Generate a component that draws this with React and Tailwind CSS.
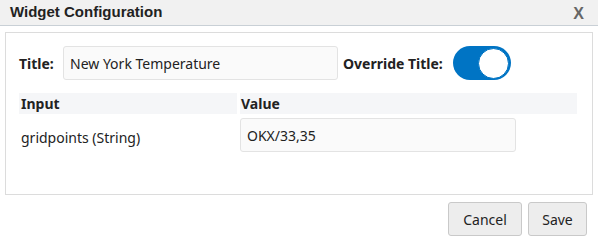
import React, { useState } from "react";

const body = { fontFamily: '"Segoe UI", "Noto Sans", sans-serif' };

const App = () => {
  const [title, setTitle] = useState("New York Temperature");
  const [override, setOverride] = useState(true);
  const [grid, setGrid] = useState("OKX/33,35");

  return (
    <div className="w-[598px] h-[244px] bg-white text-[#222] overflow-hidden" style={body}>
      {/* HEADER */}
      <div className="h-[26px] flex items-center justify-between pl-[10px] pr-[14px] bg-[#f1f1f1] border-b border-[#c9d0d6]">
        <span className="font-['Liberation_Sans',Arial,sans-serif] font-bold text-[15px] text-[#222]">
          Widget Configuration
        </span>
        <span className="font-['Liberation_Sans',Arial,sans-serif] font-bold text-[16px] text-[#666] pt-[2px]">
          X
        </span>
      </div>

      {/* PANEL */}
      <div className="mx-[5px] mt-[6px] h-[163px] border border-[#dcdcdc] px-[13px] pt-[13px]">
        <div className="flex items-center h-[34px]">
          <label className="font-bold text-[14px] w-[44px]">Title:</label>
          <input
            value={title}
            onChange={(e) => setTitle(e.target.value)}
            className="w-[275px] h-[34px] px-[6px] text-[14px] bg-[#fafafa] border border-[#e3e3e3] rounded-[3px] outline-none"
          />
          <label className="font-bold text-[14px] ml-[5px]">Override Title:</label>
          <button
            onClick={() => setOverride(!override)}
            className={`ml-[10px] w-[58px] h-[34px] rounded-full flex items-center px-[2px] ${
              override ? "bg-[#0074c4] justify-end" : "bg-[#ccc] justify-start"
            }`}
          >
            <span className="w-[31px] h-[31px] rounded-full bg-white border border-[#0074c4]" />
          </button>
        </div>

        <div className="mt-[13px] w-[558px] grid grid-cols-[218px_1fr] gap-x-[3px]">
          <div className="h-[21px] bg-[#f5f6f8] px-[2px] font-bold text-[14px] leading-[21px]">Input</div>
          <div className="h-[21px] bg-[#f5f6f8] px-[1px] font-bold text-[14px] leading-[21px]">Value</div>
          <div className="h-[40px] px-[2px] pt-[6px] flex items-center text-[14px]">gridpoints (String)</div>
          <div className="pt-[4px]">
            <input
              value={grid}
              onChange={(e) => setGrid(e.target.value)}
              className="w-[276px] h-[34px] px-[6px] text-[14px] bg-[#fafafa] border border-[#e3e3e3] rounded-[3px] outline-none"
            />
          </div>
        </div>
      </div>

      {/* FOOTER */}
      <div className="flex justify-end gap-[6px] pr-[11px] mt-[7px]">
        <button className="w-[74px] h-[34px] bg-[#ededed] border border-[#c9c9c9] rounded-[3px] text-[14px]">
          Cancel
        </button>
        <button className="w-[59px] h-[34px] bg-[#ededed] border border-[#c9c9c9] rounded-[3px] text-[14px]">
          Save
        </button>
      </div>
    </div>
  );
};

export default App;
